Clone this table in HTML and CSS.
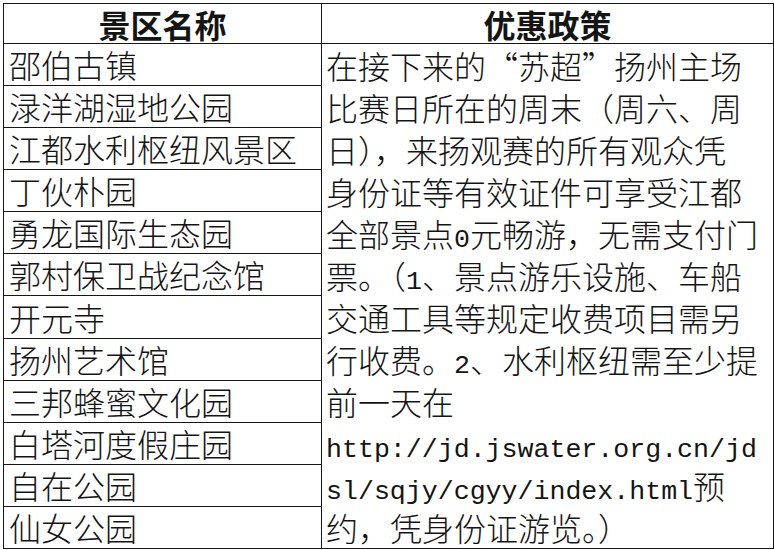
FILE: index.html
```html
<!DOCTYPE html>
<html lang="zh-CN">
<head>
<meta charset="utf-8">
<link rel="stylesheet" href="styles.css">
</head>
<body>
<table class="policy">
  <thead>
    <tr class="head-row">
      <th class="col-name">景区名称</th>
      <th class="col-policy">优惠政策</th>
    </tr>
  </thead>
  <tbody>
    <tr>
      <td class="name">邵伯古镇</td>
      <td class="policy-text" rowspan="12">
        <div class="line">在接下来的“苏超”扬州主场</div>
        <div class="line">比赛日所在的周末（周六、周</div>
        <div class="line">日），来扬观赛的所有观众凭</div>
        <div class="line">身份证等有效证件可享受江都</div>
        <div class="line">全部景点<span class="lat">0</span>元畅游，无需支付门</div>
        <div class="line">票。（<span class="lat">1</span>、景点游乐设施、车船</div>
        <div class="line">交通工具等规定收费项目需另</div>
        <div class="line">行收费。<span class="lat">2</span>、水利枢纽需至少提</div>
        <div class="line">前一天在</div>
        <div class="line"><span class="lat">http://jd.jswater.org.cn/jd</span></div>
        <div class="line"><span class="lat">sl/sqjy/cgyy/index.html</span>预</div>
        <div class="line">约，凭身份证游览。）</div>
      </td>
    </tr>
    <tr><td class="name">渌洋湖湿地公园</td></tr>
    <tr><td class="name">江都水利枢纽风景区</td></tr>
    <tr><td class="name">丁伙朴园</td></tr>
    <tr><td class="name">勇龙国际生态园</td></tr>
    <tr><td class="name">郭村保卫战纪念馆</td></tr>
    <tr><td class="name">开元寺</td></tr>
    <tr><td class="name">扬州艺术馆</td></tr>
    <tr><td class="name">三邦蜂蜜文化园</td></tr>
    <tr><td class="name">白塔河度假庄园</td></tr>
    <tr><td class="name">自在公园</td></tr>
    <tr><td class="name">仙女公园</td></tr>
  </tbody>
</table>
</body>
</html>
```
FILE: styles.css
```css
html, body {
  margin: 0;
  padding: 0;
  background: #ffffff;
}
body {
  padding: 3px 0 0 3px;
  font-family: "Noto Sans CJK SC", "Liberation Serif", sans-serif;
  font-weight: 300;
  color: #141414;
}
.policy {
  border-collapse: collapse;
  width: 768px;
  table-layout: fixed;
  font-size: 32px;
}
.policy th,
.policy td {
  border: 1px solid #161616;
  padding: 0;
}
.col-name { width: 317px; }
.col-policy { width: 451px; }
.head-row th {
  height: 39px;
  font-weight: 700;
  font-size: 32px;
  line-height: 38px;
  text-align: center;
  vertical-align: middle;
}
.name {
  height: 41px;
  line-height: 41px;
  padding-left: 5px !important;
  white-space: nowrap;
  vertical-align: middle;
}
.policy-text {
  vertical-align: top;
  padding-left: 4px !important;
  white-space: nowrap;
}
.line {
  height: 42px;
  line-height: 42px;
}
.lat {
  font-family: "Liberation Mono", monospace;
  font-size: 26.6px;
  font-weight: 400;
  line-height: 1;
}
```
